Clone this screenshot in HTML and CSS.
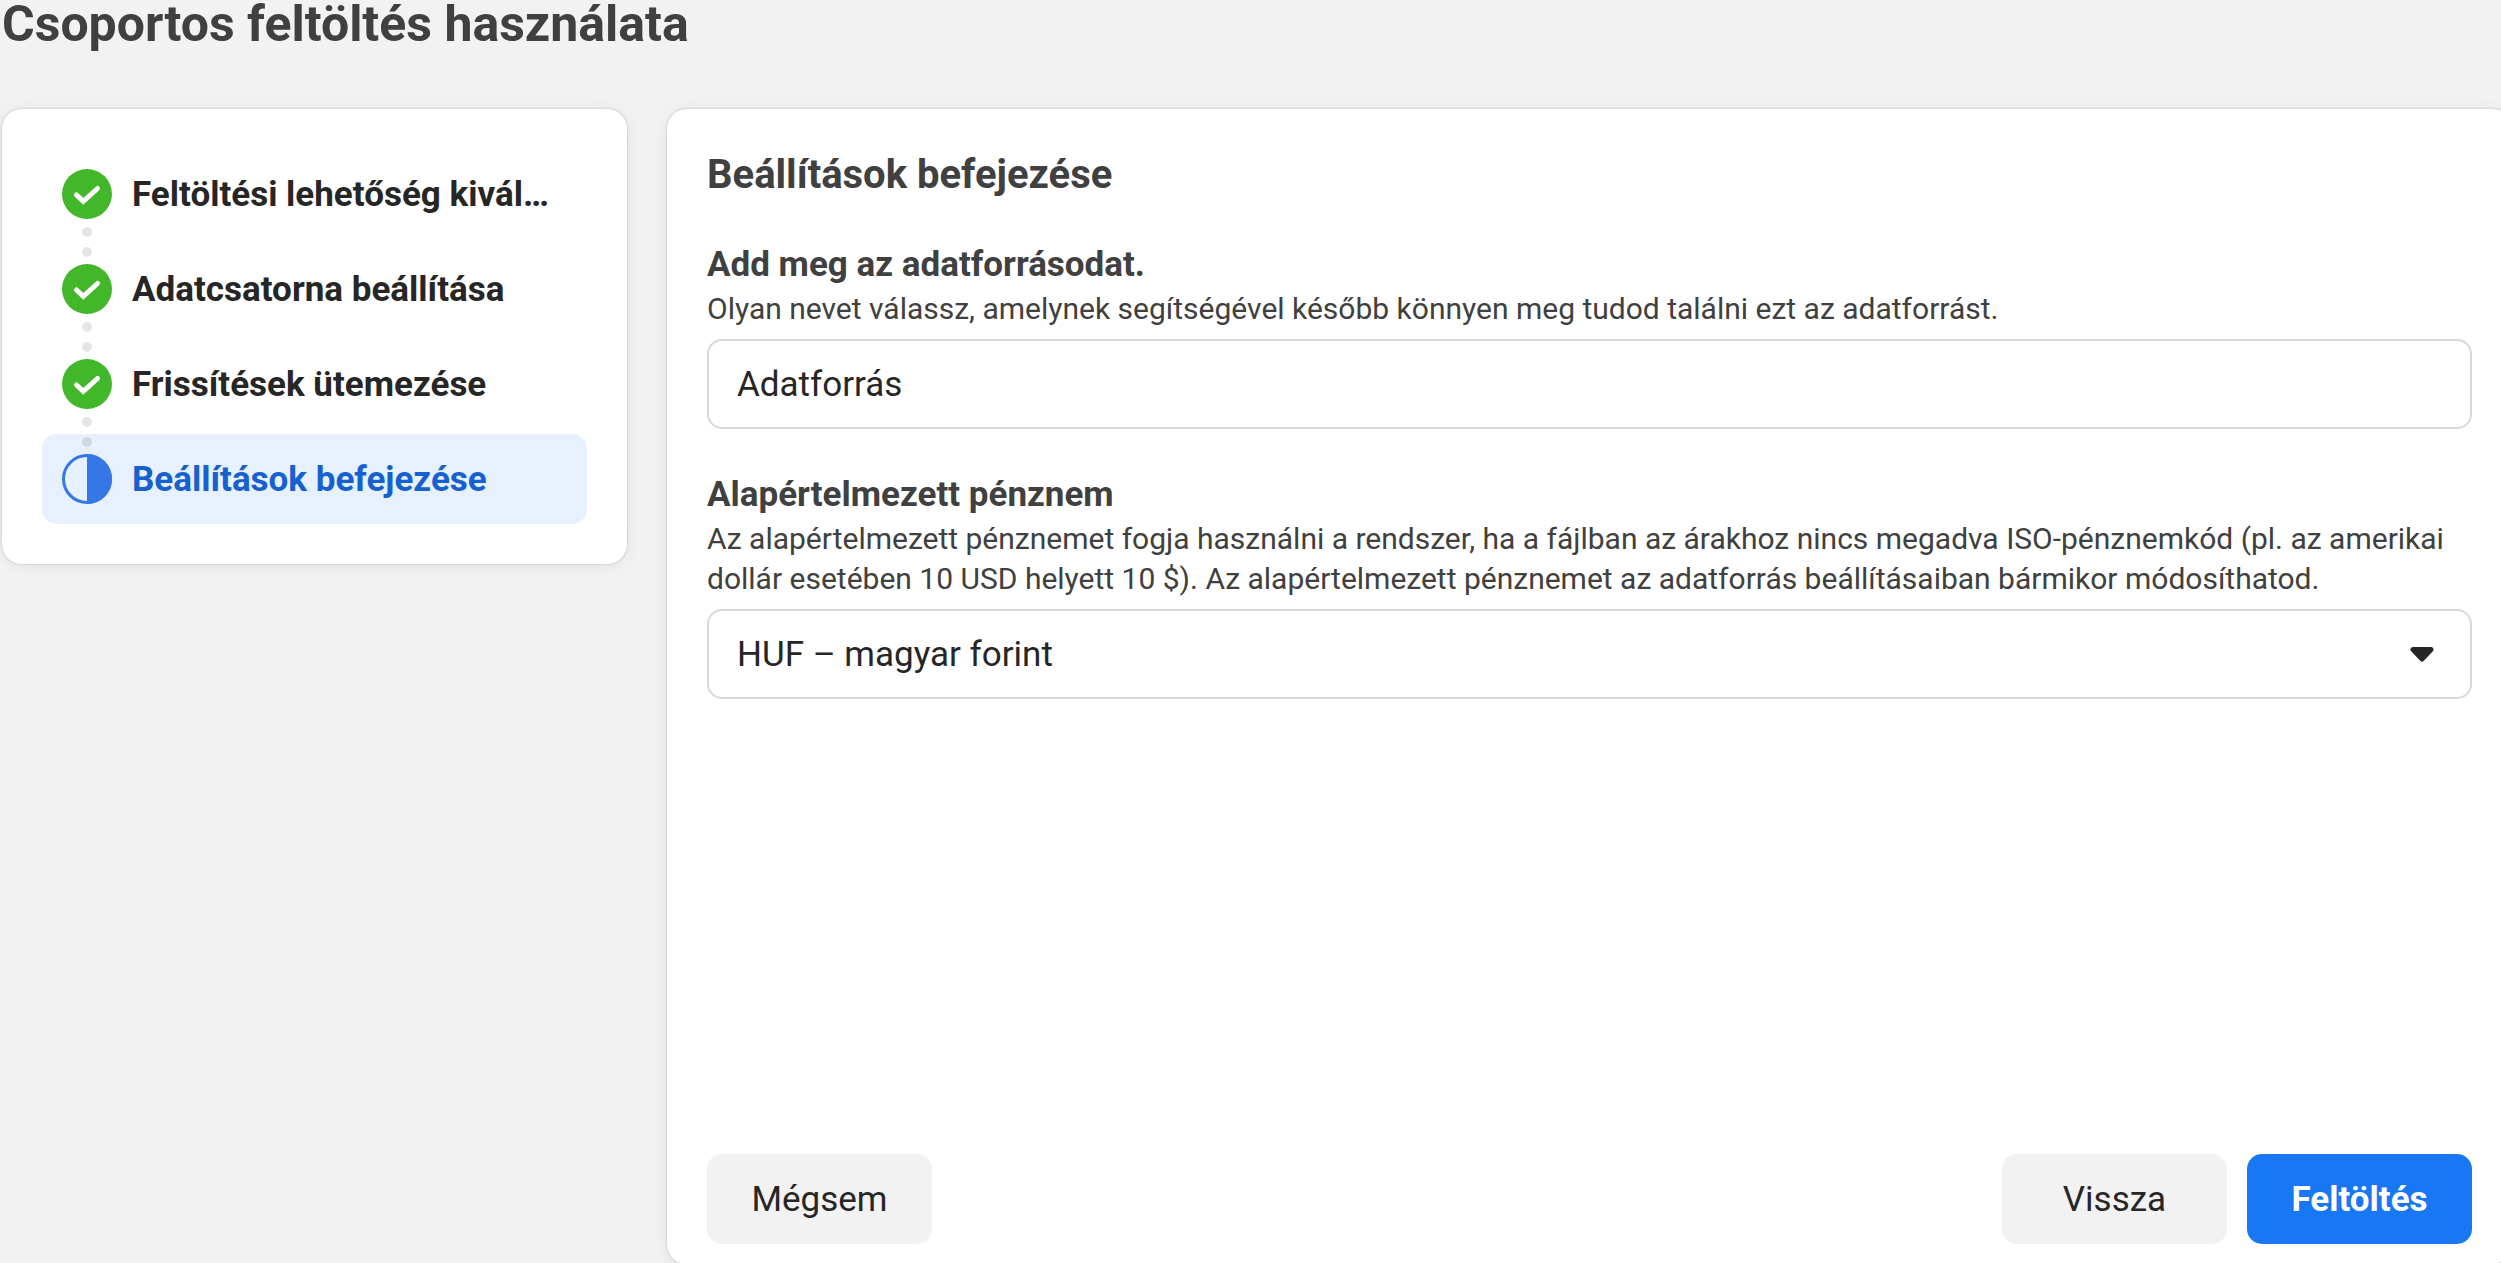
FILE: index.html
```
<!DOCTYPE html>
<html lang="hu">
<head>
<meta charset="utf-8">
<title>Csoportos feltöltés használata</title>
<link rel="stylesheet" href="styles.css">
</head>
<body>
<svg class="sprite" width="0" height="0" aria-hidden="true">
  <symbol id="check" viewBox="0 0 50 50">
    <circle cx="25" cy="25" r="25" fill="#42b72a"/>
    <path d="M14.5 26 L21.3 32.3 L35.5 19.5" fill="none" stroke="#fff" stroke-width="5" stroke-linecap="round" stroke-linejoin="miter"/>
  </symbol>
  <symbol id="half" viewBox="0 0 50 50">
    <circle cx="25" cy="25" r="23.5" fill="none" stroke="#3578e5" stroke-width="3"/>
    <path d="M25 0a25 25 0 0 1 0 50z" fill="#3578e5"/>
  </symbol>
</svg>
<div class="page">
  <h1 class="page-title">Csoportos feltöltés használata</h1>
  <div class="layout">
    <nav class="card steps-card">
      <ol class="steps">
        <li class="step"><svg class="step-icon"><use href="#check"/></svg><span class="step-text">Feltöltési lehetőség kivál…</span></li>
        <li class="step"><svg class="step-icon"><use href="#check"/></svg><span class="step-text">Adatcsatorna beállítása</span></li>
        <li class="step"><svg class="step-icon"><use href="#check"/></svg><span class="step-text">Frissítések ütemezése</span></li>
        <li class="step active" aria-current="step"><svg class="step-icon"><use href="#half"/></svg><span class="step-text">Beállítások befejezése</span></li>
      </ol>
    </nav>
    <form class="card main-card">
      <h2 class="card-title">Beállítások befejezése</h2>
      <div class="field">
        <label class="label" for="source">Add meg az adatforrásodat.</label>
        <p class="hint">Olyan nevet válassz, amelynek segítségével később könnyen meg tudod találni ezt az adatforrást.</p>
        <input class="control" type="text" id="source" name="source" value="Adatforrás">
      </div>
      <div class="field">
        <label class="label" for="currency">Alapértelmezett pénznem</label>
        <p class="hint">Az alapértelmezett pénznemet fogja használni a rendszer, ha a fájlban az árakhoz nincs megadva ISO-pénznemkód (pl. az amerikai dollár esetében 10 USD helyett 10 $). Az alapértelmezett pénznemet az adatforrás beállításaiban bármikor módosíthatod.</p>
        <div class="select-wrap">
          <select class="control" id="currency" name="currency">
            <option>HUF – magyar forint</option>
          </select>
          <svg class="arrow" viewBox="0 0 24 15"><path d="M3 2.500H21L12 12z" fill="#262626" stroke="#262626" stroke-width="5" stroke-linejoin="round"/></svg>
        </div>
      </div>
      <div class="actions">
        <button class="btn" type="button">Mégsem</button>
        <div class="actions-right">
          <button class="btn" type="button">Vissza</button>
          <button class="btn primary" type="submit">Feltöltés</button>
        </div>
      </div>
    </form>
  </div>
</div>
</body>
</html>
```

FILE: styles.css
```
* {box-sizing: border-box;}
html {overflow: hidden;}
body {margin: 0;background: #f2f2f2;font-family: Roboto, Arial, sans-serif;font-size: 35px;color: #404040;}
h1, h2, p {margin: 0;}
.sprite {position: absolute;}

/* the form card runs slightly past the right and bottom window edges */
.page {display: flex;flex-direction: column;min-height: calc(100vh + 1px);margin-right: -11px;padding-left: 2px;}
.page-title {font-size: 50px;line-height: 48px;font-weight: 700;margin-bottom: 61px;}
.layout {display: flex;flex: 1;gap: 40px;}
.card {background: #fff;border-radius: 20px;box-shadow: 0 0 3px rgba(0,0,0,.2), 0 2px 20px rgba(0,0,0,.06);}

.steps-card {flex: none;width: 625px;align-self: flex-start;padding: 40px;}
.steps {list-style: none;margin: 0;padding: 0;display: flex;flex-direction: column;gap: 5px;}
.step {position: relative;display: flex;align-items: center;gap: 20px;height: 90px;padding: 0 20px;border-radius: 15px;font-weight: 700;color: #262626;}
.step-icon {flex: none;width: 50px;height: 50px;}
.step-text {white-space: nowrap;}
.step.active {background: #e7f0fd;color: #1760cf;}
/* connector dots between two steps */
.step:not(:last-child)::after {content: "";position: absolute;z-index: 1;left: 40px;top: 78px;width: 10px;height: 10px;border-radius: 50%;background: rgba(0,0,0,.1);box-shadow: 0 20px rgba(0,0,0,.1);}

.main-card {flex: 1;min-width: 0;display: flex;flex-direction: column;gap: 42px;padding: 42px 40px 20px;}
.card-title {font-size: 40px;line-height: 48px;font-weight: 700;}
.field {display: flex;flex-direction: column;}
.label {line-height: 48px;font-weight: 700;}
.hint {font-size: 30px;line-height: 40px;margin-bottom: 10px;}
.control {appearance: none;width: 100%;height: 90px;padding: 0 28px;border: 2px solid #d9d9d9;border-radius: 15px;background: #fff;font: inherit;color: #262626;outline: none;}
.select-wrap {position: relative;}
.arrow {position: absolute;right: 38px;top: 38px;width: 24px;height: 15px;pointer-events: none;}

.actions {display: flex;justify-content: space-between;margin-top: auto;}
.actions-right {display: flex;gap: 20px;}
.btn {min-width: 225px;height: 90px;padding: 0 40px;border: 0;border-radius: 15px;background: #f2f2f2;font: inherit;color: #262626;}
.btn.primary {background: #1877f2;color: #fff;font-weight: 700;}
```
